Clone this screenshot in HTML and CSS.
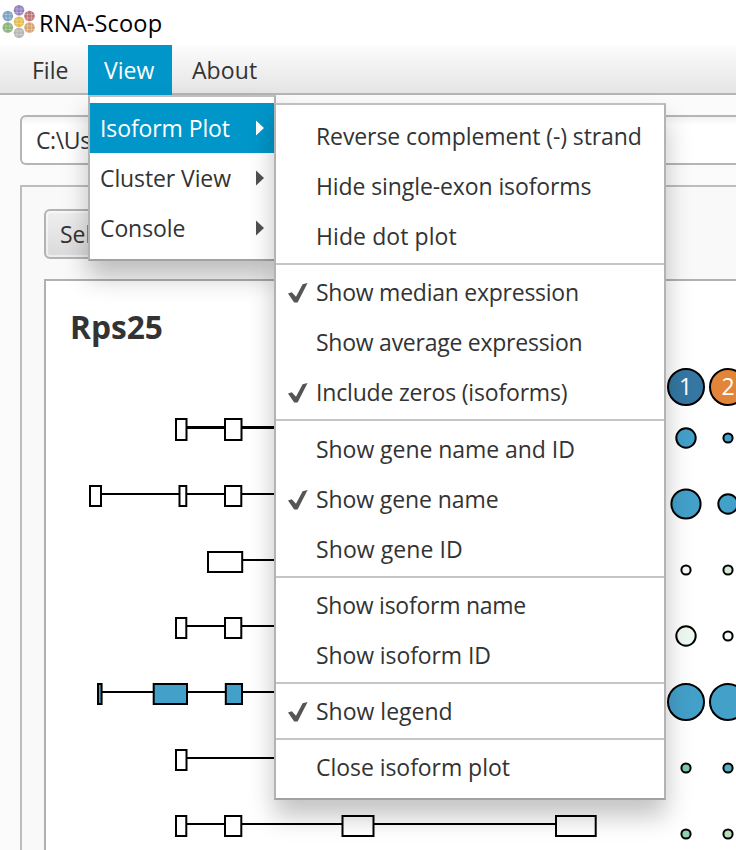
FILE: index.html
```html
<!DOCTYPE html>
<html lang="en">
<head>
<meta charset="utf-8">
<title>RNA-Scoop</title>
<link rel="stylesheet" href="styles.css">
</head>
<body>
<svg class="defs" aria-hidden="true">
  <symbol id="check" viewBox="0 0 20 20"><path d="M0 10.6 3.8 9.3 8 13.8 14.6 1.2 19.6 0 9.6 19.6H6.2Z"/></symbol>
  <symbol id="arrow" viewBox="0 0 8 16"><path d="M0 .5 8 8 0 15.5Z"/></symbol>
</svg>
<header class="titlebar">
  <svg class="logo" viewBox="0 0 34 34">
    <g class="ball">
      <circle cx="17" cy="5.3" r="5.3" fill="#9280bd"/>
      <circle cx="5.8" cy="11" r="5.3" fill="#7b9fc0"/>
      <circle cx="27.5" cy="11" r="5.3" fill="#c07378"/>
      <circle cx="17" cy="16.8" r="5.3" fill="#e2bd4e"/>
      <circle cx="5.8" cy="22.5" r="5.3" fill="#8ab278"/>
      <circle cx="27.5" cy="22.5" r="5.3" fill="#d6a371"/>
      <circle cx="17" cy="27.7" r="5.3" fill="#b5b5b5"/>
    </g>
    <path class="mesh" d="M15 1v9M19 1v9M12 4h10M12 7.500h10M4 6v10M8 6v10M1 9.500h10M1 13h10M25.500 6v10M29.500 6v10M22.500 9.500h10M22.500 13h10M15 12v9M19 12v9M12 15h10M12 18.500h10M4 18v9M8 18v9M1 21h10M1 24.500h10M25.500 18v9M29.500 18v9M22.500 21h10M22.500 24.500h10M15 23v9M19 23v9M12 26h10M12 29.500h10"/>
  </svg>
  <span class="title">RNA-Scoop</span>
</header>
<nav class="menubar">
  <div class="menu"><span>File</span></div>
  <div class="menu open"><span>View</span>
    <div class="popup main-popup">
      <div class="entry active"><span class="snug">Isoform Plot</span><svg class="arrow"><use href="#arrow"/></svg></div>
      <div class="entry"><span class="snug">Cluster View</span><svg class="arrow"><use href="#arrow"/></svg></div>
      <div class="entry"><span class="snug">Console</span><svg class="arrow"><use href="#arrow"/></svg></div>
    </div>
    <div class="popup sub-popup">
      <div class="item"><span class="snug">Reverse complement (-) strand</span></div>
      <div class="item"><span class="snug">Hide single-exon isoforms</span></div>
      <div class="item"><span class="loose">Hide dot plot</span></div>
      <hr>
      <div class="item"><svg class="check"><use href="#check"/></svg><span class="tight">Show median expression</span></div>
      <div class="item"><span class="tight">Show average expression</span></div>
      <div class="item"><svg class="check"><use href="#check"/></svg><span class="tighter">Include zeros (isoforms)</span></div>
      <hr class="wide">
      <div class="item"><span class="slight">Show gene name and ID</span></div>
      <div class="item"><svg class="check"><use href="#check"/></svg><span class="snug">Show gene name</span></div>
      <div class="item"><span class="loose">Show gene ID</span></div>
      <hr>
      <div class="item"><span class="tight">Show isoform name</span></div>
      <div class="item"><span class="snug">Show isoform ID</span></div>
      <hr>
      <div class="item"><svg class="check"><use href="#check"/></svg><span>Show legend</span></div>
      <hr>
      <div class="item"><span class="slight">Close isoform plot</span></div>
    </div>
  </div>
  <div class="menu"><span class="loose">About</span></div>
</nav>
<main class="content">
  <div class="path-field">C:\Us</div>
  <section class="panel">
    <div class="select-button">Sel</div>
    <div class="plot">
      <svg class="canvas" viewBox="46 281 690 569">
        <text class="gene" x="70" y="339" textLength="93" lengthAdjust="spacingAndGlyphs">Rps25</text>
        <g class="intron">
          <path class="bold" d="M187 427.5H280"/>
          <path d="M102 494H280M243 560H280M187 626H280M102 692H280M187 758H280M187 824H556"/>
        </g>
        <g class="exon">
          <rect x="176" y="419" width="10.5" height="21"/><rect x="225" y="419" width="16.5" height="21"/>
          <rect x="90" y="486" width="11" height="20"/><rect x="179.5" y="486" width="6.8" height="20"/><rect x="225" y="486" width="16.3" height="20"/>
          <rect x="208" y="552" width="34.2" height="20"/>
          <rect x="176" y="618" width="10.3" height="20"/><rect x="225" y="618" width="16.3" height="20"/>
          <rect class="hot" x="98" y="684" width="3.6" height="20"/><rect class="hot" x="153.7" y="684" width="33.3" height="20"/><rect class="hot" x="225.8" y="684" width="16.2" height="20"/>
          <rect x="176" y="750" width="10.5" height="20"/>
          <rect x="176" y="816" width="10.3" height="20"/><rect x="225" y="816" width="16.3" height="20"/><rect x="342.5" y="816" width="31" height="20"/><rect x="556" y="816" width="39.7" height="20"/>
        </g>
        <g class="dot">
          <circle cx="686" cy="387" r="18" fill="#3577a2"/><circle cx="728" cy="387" r="18" fill="#e38539"/>
          <circle cx="686" cy="438" r="9.7" fill="#43a0c9"/><circle cx="728" cy="438" r="4.6" fill="#43a0c9"/>
          <circle cx="686" cy="504" r="14.6" fill="#43a0c9"/><circle cx="728" cy="504" r="9.7" fill="#43a0c9"/>
          <circle cx="686" cy="570" r="4.6" fill="#f4fbf5"/><circle cx="728" cy="570" r="4.6" fill="#d3ebd5"/>
          <circle cx="686" cy="636" r="9.7" fill="#edf8f0"/><circle cx="728" cy="636" r="4.6" fill="#f4fbf5"/>
          <circle cx="686" cy="702" r="18" fill="#43a0c9"/><circle cx="728" cy="702" r="18" fill="#43a0c9"/>
          <circle cx="686" cy="768" r="4.6" fill="#7cc8b4"/><circle cx="728" cy="768" r="4.6" fill="#56aec2"/>
          <circle cx="686" cy="834" r="4.6" fill="#8fd0ae"/><circle cx="728" cy="834" r="4.6" fill="#b5dfb9"/>
        </g>
        <g class="cluster"><text x="685.5" y="395">1</text><text x="728" y="395">2</text></g>
      </svg>
    </div>
  </section>
</main>
</body>
</html>
```
FILE: styles.css
```css
* { box-sizing: border-box; }
body {
  margin: 0;
  width: 736px;
  height: 850px;
  overflow: hidden;
  display: flex;
  flex-direction: column;
  background: #fbfbfb;
  font: 23px/50px "Open Sans", "Noto Sans", sans-serif;
  color: #333;
  white-space: nowrap;
}
.defs { position: absolute; width: 0; height: 0; }
.titlebar {
  flex: none;
  display: flex;
  align-items: center;
  height: 45px;
  padding-left: 2px;
  background: #fff;
  color: #000;
}
.logo { width: 34px; height: 34px; margin: 0 3px 2px 0; }
.mesh { fill: none; stroke: #fff; stroke-opacity: .35; stroke-width: .8; }
.title { font-size: 23.6px; letter-spacing: .15px; }
.menubar {
  flex: none;
  display: flex;
  height: 50px;
  padding-left: 16px;
  border-bottom: 2px solid #b5b5b5;
  background: linear-gradient(#fcfcfc, #e5e5e5);
}
.menu { position: relative; width: 72px; height: 50px; padding: 0 16px; line-height: 51px; }
.menu.open { width: 84px; background: #0096c9; color: #fff; }
.menu:last-child { width: 100px; padding-left: 20px; }
.popup {
  position: absolute;
  border: 2px solid #b3b3b3;
  border-top-color: #c0c0c0;
  border-bottom-color: #a2a2a2;
  background: #fff;
  color: #333;
  line-height: 48px;
  box-shadow: 0 16px 24px rgba(0, 0, 0, .24);
}
.main-popup { left: 0; top: 50px; width: 188px; height: 166px; padding-top: 6px; z-index: 2; line-height: 50px; }
.sub-popup { left: 186px; top: 58px; width: 392px; height: 697px; padding-top: 7px; z-index: 3; }
.entry { display: flex; align-items: center; justify-content: space-between; height: 50px; padding: 0 10px; }
.entry.active { background: #0096c9; color: #fff; }
.arrow { width: 8px; height: 16px; fill: #505050; }
.active .arrow { fill: #fff; }
.item { display: flex; align-items: center; height: 50px; padding-left: 40px; }
.item span { height: 50px; }
.check { width: 20px; height: 20px; margin: 0 8px 0 -28px; fill: #555; }
.slight { letter-spacing: -.05px; }
.snug { letter-spacing: -.1px; }
.tighter { letter-spacing: -.18px; }
.tight { letter-spacing: -.25px; }
.loose { letter-spacing: .08px; }
hr { height: 2px; margin: 1px 0 3px; border: 0; background: #c5c5c5; }
hr.wide { margin-bottom: 4px; }
.content { flex: 1; display: flex; flex-direction: column; padding: 20px 0 0 20px; }
.path-field {
  height: 50px;
  padding-left: 14px;
  border: 2px solid #b5b5b5;
  border-right: 0;
  border-radius: 6px 0 0 6px;
  background: linear-gradient(#f2f2f2, #fff 8px);
  line-height: 47px;
  letter-spacing: -.4px;
}
.panel {
  flex: 1;
  margin-top: 20px;
  padding: 22px 0 0 22px;
  border: 2px solid #bdbdbd;
  border-width: 2px 0 0 2px;
  background: #f9f9f9;
}
.select-button {
  width: 120px;
  height: 50px;
  padding-left: 14px;
  border: 2px solid #b3b3b3;
  border-radius: 6px;
  background: linear-gradient(#efefef, #dadada);
  box-shadow: inset 0 0 0 2px rgba(255, 255, 255, .5);
  line-height: 47px;
}
.plot { height: 571px; margin-top: 20px; border: 2px solid #b0b0b0; border-width: 2px 0 0 2px; background: #fff; }
.canvas { display: block; width: 690px; height: 569px; }
.gene { font-size: 32px; font-weight: 700; fill: #333; }
.intron { fill: none; stroke: #000; stroke-width: 2; }
.intron .bold { stroke-width: 3; }
.exon { fill: #fff; stroke: #000; stroke-width: 2; }
.exon .hot { fill: #43a0c9; }
.dot { stroke: #000; stroke-width: 2; }
.cluster { fill: #fff; font-size: 23px; text-anchor: middle; }
```
